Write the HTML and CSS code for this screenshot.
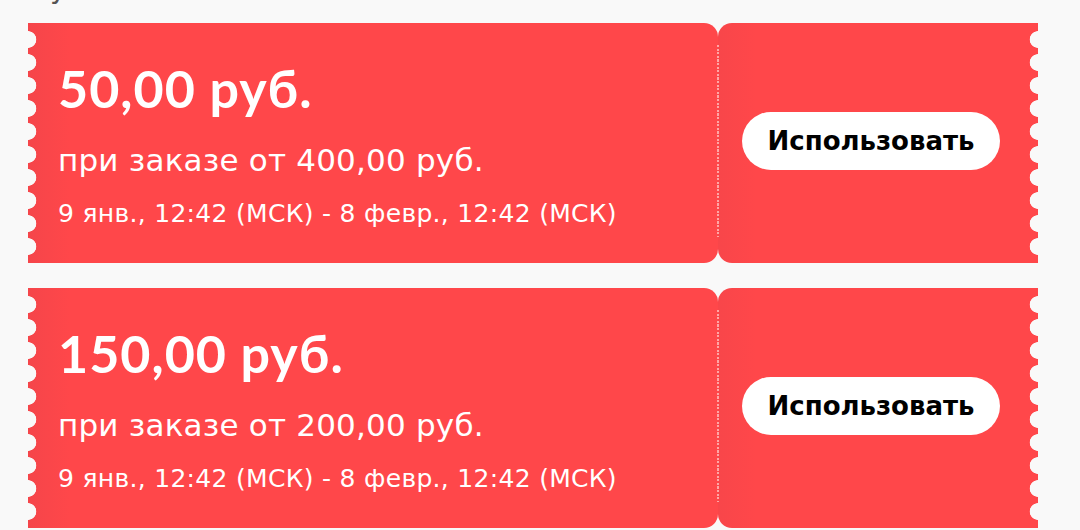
FILE: index.html
```html
<!DOCTYPE html>
<html lang="ru">
<head>
<meta charset="utf-8">
<title>Купоны</title>
<link rel="stylesheet" href="styles.css">
</head>
<body>
<div class="page">
  <div class="heading"><span class="heading-text">Купоны магазина</span></div>
  <div class="list">
    <div class="coupon">
      <div class="coupon-main">
        <div class="amount">50,00 руб.</div>
        <div class="condition">при заказе от 400,00 руб.</div>
        <div class="period">9 янв., 12:42 (МСК) - 8 февр., 12:42 (МСК)</div>
      </div>
      <div class="coupon-side">
        <button class="use-btn">Использовать</button>
      </div>
    </div>
    <div class="coupon">
      <div class="coupon-main">
        <div class="amount">150,00 руб.</div>
        <div class="condition">при заказе от 200,00 руб.</div>
        <div class="period">9 янв., 12:42 (МСК) - 8 февр., 12:42 (МСК)</div>
      </div>
      <div class="coupon-side">
        <button class="use-btn">Использовать</button>
      </div>
    </div>
  </div>
</div>
</body>
</html>
```

FILE: styles.css
```css
* { box-sizing: border-box; }
html, body { margin: 0; padding: 0; }
body {
  background: #f9f9f9;
  font-family: "DejaVu Sans", "Noto Sans", sans-serif;
  width: 1080px;
  height: 530px;
  overflow: hidden;
}
.page {
  padding-left: 28px;
}
.heading {
  height: 23px;
  overflow: hidden;
  font-size: 28px;
  line-height: 32px;
  color: #555;
  padding-left: 2px;
}
.heading-text {
  display: block;
  margin-top: -27px;
}
.list {
  display: flex;
  flex-direction: column;
  gap: 25px;
  width: 1010px;
}
.coupon {
  display: flex;
  height: 240px;
}
.coupon-main {
  position: relative;
  width: 690px;
  background: linear-gradient(90deg, #f5454a 0%, #ff474a 6%, #ff474a 100%);
  border-radius: 0 14px 14px 0;
  padding-left: 30px;
  padding-top: 36px;
  display: flex;
  flex-direction: column;
  color: #fff;
}
.coupon-main::before {
  content: "";
  position: absolute;
  left: 0;
  top: 4.5px;
  width: 10px;
  height: 230px;
  background: radial-gradient(circle at 0 50%, #f9f9f9 8px, rgba(249,249,249,0) 8.6px) repeat-y;
  background-size: 10px 23px;
}
.coupon-side {
  position: relative;
  width: 320px;
  background: linear-gradient(90deg, #f8464a 0%, #ff474a 12%, #ff474a 100%);
  border-radius: 14px 0 0 14px;
  display: flex;
  align-items: center;
  padding-left: 24px;
}
.coupon-side::before {
  content: "";
  position: absolute;
  left: -1px;
  top: 22px;
  bottom: 26px;
  width: 2px;
  background: repeating-linear-gradient(180deg, #ffa6a6 0 2.2px, rgba(255,166,166,0) 2.2px 3.6px);
}
.coupon-side::after {
  content: "";
  position: absolute;
  right: 0;
  top: 4.5px;
  width: 10px;
  height: 230px;
  background: radial-gradient(circle at 100% 50%, #f9f9f9 8px, rgba(249,249,249,0) 8.6px) repeat-y;
  background-size: 10px 23px;
}
.amount {
  font-family: "Lato", "Noto Sans", sans-serif;
  font-size: 52px;
  font-weight: 700;
  line-height: 58px;
  letter-spacing: 1px;
}
.condition {
  font-size: 31px;
  line-height: 36px;
  letter-spacing: 0.2px;
  margin-top: 25px;
}
.period {
  font-size: 25px;
  line-height: 32px;
  letter-spacing: 0.3px;
  margin-top: 20px;
}
.use-btn {
  width: 258px;
  height: 58px;
  border: none;
  border-radius: 29px;
  background: #fff;
  color: #000;
  font-family: "DejaVu Sans", "Noto Sans", sans-serif;
  font-size: 26px;
  font-weight: 700;
  padding: 0;
  margin-top: -4px;
  cursor: pointer;
}
```
